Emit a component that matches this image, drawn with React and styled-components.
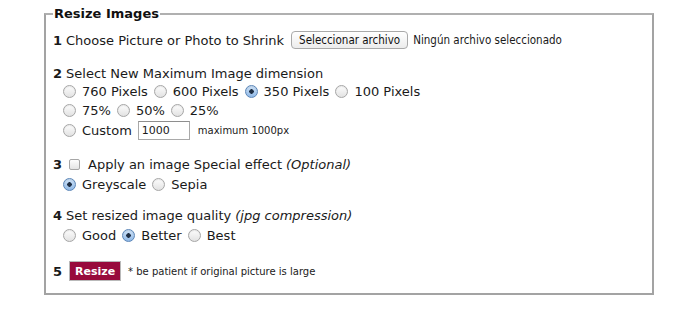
import React from "react";
import styled, { createGlobalStyle } from "styled-components";

const Global = createGlobalStyle`
  html, body { margin: 0; padding: 0; background: #fff; }
  body { font-family: "DejaVu Sans", Verdana, sans-serif; color: #1a1a1a; }
`;

const Page = styled.div`
  width: 700px;
  height: 312px;
  padding: 6px 0 0 44px;
  box-sizing: border-box;
`;

const Fieldset = styled.fieldset`
  width: 610px;
  box-sizing: border-box;
  margin: 0;
  padding: 8px 6px 11px 7px;
  border: 2px solid #a3a3a3;
  border-top-color: #b0b0b0;
`;

const Legend = styled.legend`
  font-weight: bold;
  font-size: 13px;
  padding: 0 1px;
  margin-left: 0;
  color: #111;
`;

const Section = styled.div`
  margin-bottom: ${(p) => p.$gap ?? 13}px;
`;

const Line = styled.div`
  display: flex;
  align-items: center;
  height: ${(p) => p.$h ?? 19}px;
  font-size: 13px;
  padding-left: ${(p) => (p.$indent ? 7 : 0)}px;
  white-space: nowrap;
`;

const Num = styled.b`
  font-weight: bold;
  margin-right: 4px;
`;

const Em = styled.i`
  font-style: italic;
  margin-left: 4px;
`;

const Radio = styled.span`
  display: inline-block;
  width: 13px;
  height: 13px;
  border-radius: 50%;
  box-sizing: border-box;
  border: 1px solid ${(p) => (p.$on ? "#5b86b8" : "#a6a6a6")};
  background: ${(p) =>
    p.$on
      ? "radial-gradient(circle at 50% 50%, #1f2f45 0 2px, transparent 2.5px), linear-gradient(#cfe3f8, #8fb8e6)"
      : "linear-gradient(#fdfdfd, #e2e2e2)"};
  box-shadow: inset 0 1px 1px rgba(0,0,0,0.08);
  margin: 0 6px 0 3px;
  flex: none;
`;

const Check = styled.span`
  display: inline-block;
  width: 11px;
  height: 11px;
  border-radius: 2px;
  box-sizing: border-box;
  border: 1px solid #a6a6a6;
  background: linear-gradient(#fdfdfd, #e4e4e4);
  margin: 0 8px 0 3px;
  flex: none;
`;

const Opt = styled.span`
  display: inline-flex;
  align-items: center;
  margin-right: 3px;
`;

const FileButton = styled.span`
  display: inline-flex;
  align-items: center;
  height: 18px;
  padding: 0 7px;
  margin-left: 7px;
  border: 1px solid #a9a9a9;
  border-radius: 4px;
  background: linear-gradient(#ffffff, #ececec);
  font-family: "DejaVu Sans Condensed", "DejaVu Sans", sans-serif;
  font-size: 11.5px;
  color: #111;
  box-sizing: border-box;
`;

const Small = styled.span`
  font-size: ${(p) => p.$size ?? 10}px;
  margin-left: ${(p) => p.$ml ?? 6}px;
  font-family: ${(p) => (p.$cond ? '"DejaVu Sans Condensed", "DejaVu Sans", sans-serif' : "inherit")};
`;

const TextBox = styled.span`
  display: inline-flex;
  align-items: center;
  width: 52px;
  height: 19px;
  box-sizing: border-box;
  border: 1px solid #a9a9a9;
  border-top-color: #8e8e8e;
  padding-left: 3px;
  font-size: 11px;
  margin-left: 3px;
`;

const ResizeButton = styled.span`
  display: inline-flex;
  align-items: center;
  justify-content: center;
  width: 52px;
  height: 20px;
  box-sizing: border-box;
  background: #980a3c;
  border: 1px solid #b9b9b9;
  color: #fff;
  font-weight: bold;
  font-size: 11px;
  margin-left: 3px;
`;

const R = ({ on, children }) => (
  <Opt>
    <Radio $on={on} />
    {children}
  </Opt>
);

export default function App() {
  return (
    <Page>
      <Global />
      <Fieldset>
        <Legend>Resize Images</Legend>
        <Section $gap={13}>
          <Line $h={22}>
            <Num>1</Num>Choose Picture or Photo to Shrink
            <FileButton>Seleccionar archivo</FileButton>
            <Small $size={11.5} $ml={5} $cond>Ningún archivo seleccionado</Small>
          </Line>
        </Section>
        <Section $gap={14}>
          <Line $h={18}>
            <Num>2</Num>Select New Maximum Image dimension
          </Line>
          <Line $indent>
            <R>760 Pixels</R>
            <R>600 Pixels</R>
            <R on>350 Pixels</R>
            <R>100 Pixels</R>
          </Line>
          <Line $indent>
            <R>75%</R>
            <R>50%</R>
            <R>25%</R>
          </Line>
          <Line $indent $h={21}>
            <R>Custom</R>
            <TextBox>1000</TextBox>
            <Small $size={10} $ml={8}>maximum 1000px</Small>
          </Line>
        </Section>
        <Section $gap={12}>
          <Line>
            <Num>3</Num>
            <Check />
            Apply an image Special effect<Em>(Optional)</Em>
          </Line>
          <Line $indent $h={20}>
            <R on>Greyscale</R>
            <R>Sepia</R>
          </Line>
        </Section>
        <Section $gap={15}>
          <Line>
            <Num>4</Num>Set resized image quality<Em>(jpg compression)</Em>
          </Line>
          <Line $indent $h={20}>
            <R>Good</R>
            <R on>Better</R>
            <R>Best</R>
          </Line>
        </Section>
        <Section $gap={0}>
          <Line $h={22}>
            <Num>5</Num>
            <ResizeButton>Resize</ResizeButton>
            <Small $size={10} $ml={7}>* be patient if original picture is large</Small>
          </Line>
        </Section>
      </Fieldset>
    </Page>
  );
}
